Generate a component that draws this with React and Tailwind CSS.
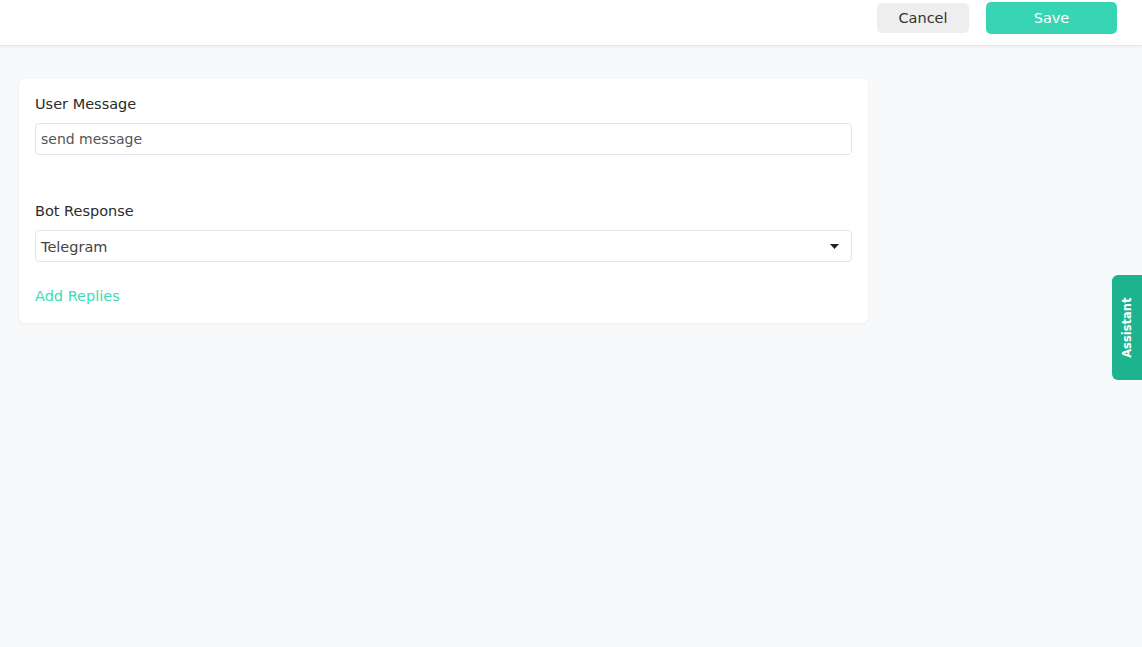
import React from 'react';

const FONT = { fontFamily: '"DejaVu Sans", "Open Sans", sans-serif' };

const Field = ({ label, children, className = '' }) => (
  <div className={className}>
    <div className="text-[14.5px] text-[#2b2b2b] leading-[22px] mb-[8px]">{label}</div>
    {children}
  </div>
);

export default function App() {
  return (
    <div className="min-h-[647px] bg-[#f8f9fa] relative overflow-hidden" style={FONT}>
      {/* Top bar */}
      <div className="h-[46px] bg-white border-b border-[#e4e6e8] shadow-[0_1px_3px_rgba(0,0,0,0.05)] flex items-start justify-end pr-[25px] pt-[2px]">
        <div className="h-[32px] flex items-center gap-[17px]">
          <button className="w-[92px] h-[30px] pt-[2px] rounded-[5px] bg-[#eeeeee] text-[14.5px] text-[#333]" style={FONT}>
            Cancel
          </button>
          <button className="w-[131px] h-[32px] pt-[2px] rounded-[5px] bg-[#38d5b4] text-[14.5px] text-white" style={FONT}>
            Save
          </button>
        </div>
      </div>

      {/* Card */}
      <div className="pt-[33px] pl-[19px]">
        <div className="w-[849px] bg-white rounded-[6px] shadow-[0_1px_3px_rgba(0,0,0,0.06)] px-4 pt-[14px] pb-[17px]">
          <Field label="User Message">
            <input
              readOnly
              value="send message"
              className="w-full h-[32px] border border-[#e2e6ec] rounded-[4px] px-[5px] text-[14px] text-[#555] outline-none"
              style={FONT}
            />
          </Field>

          <Field label="Bot Response" className="mt-[45px]">
            <div className="w-full h-[32px] border border-[#e2e6ec] rounded-[4px] pl-[5px] pr-[12px] flex items-center justify-between">
              <span className="text-[14.5px] text-[#444] pt-[3px]">Telegram</span>
              <svg width="9" height="5" viewBox="0 0 9 5">
                <path d="M0 0h9L4.5 5z" fill="#222" />
              </svg>
            </div>
          </Field>

          <div className="mt-[24px] text-[14.5px] text-[#3ddbb5] leading-5">Add Replies</div>
        </div>
      </div>

      {/* Assistant tab */}
      <div className="absolute right-0 top-[275px] w-[30px] h-[105px] bg-[#1db38f] rounded-l-[6px] flex items-center justify-center">
        <span className="-rotate-90 whitespace-nowrap text-white text-[11.5px] font-semibold">Assistant</span>
      </div>
    </div>
  );
}
